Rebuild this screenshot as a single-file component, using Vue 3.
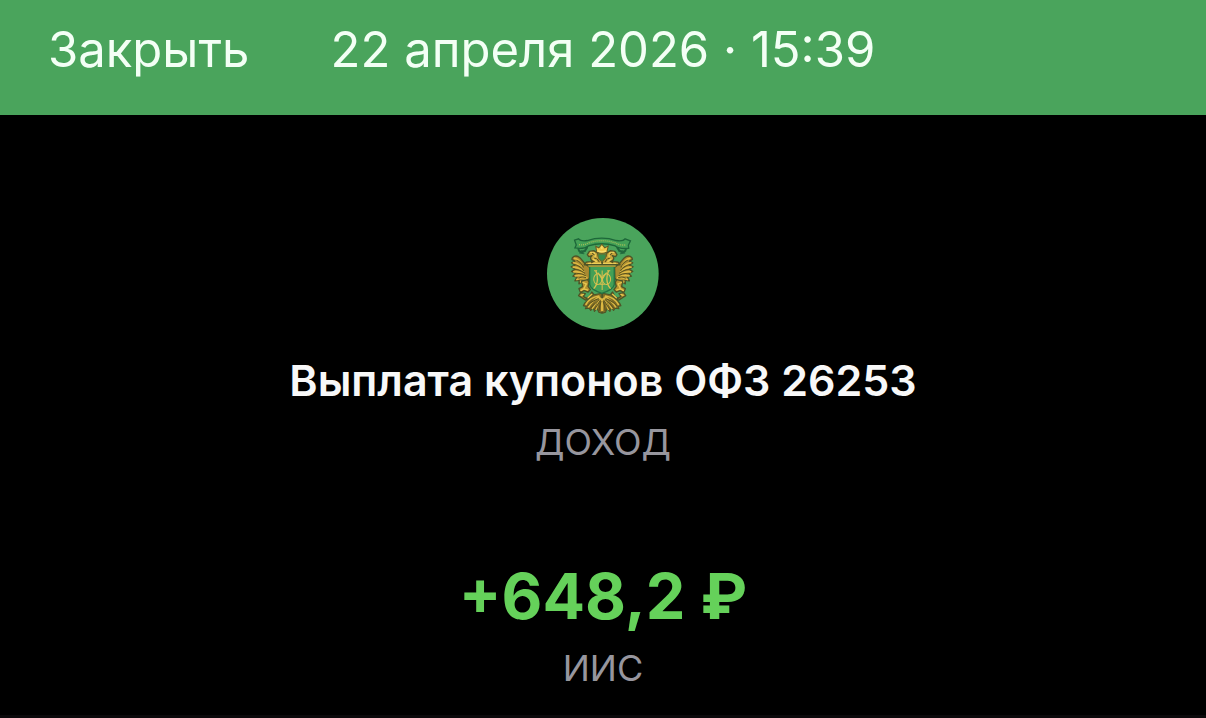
<script setup>
const operation = {
  date: '22 апреля 2026 · 15:39',
  title: 'Выплата купонов ОФЗ 26253',
  kind: 'ДОХОД',
  amount: '+648,2 ₽',
  account: 'ИИС',
}
</script>

<template>
  <div class="screen">
    <header class="bar">
      <button class="close" type="button">Закрыть</button>
      <time class="date" datetime="2026-04-22T15:39">{{ operation.date }}</time>
    </header>
    <main class="details">
      <svg class="emblem" viewBox="24 24 333 333" aria-hidden="true">
        <defs>
          <g id="eagle-half" stroke-linejoin="round" stroke-linecap="round">
            <path d="M142 164 C132 158 128 144 117 139 C109 134 98 139 98 147 L107 152 L97 157 L107 164 L96 169 L107 176 L97 183 L109 189 L101 197 L113 200 L107 211 L120 209 L119 220 L132 211 L135 221 L150 203 L151 171Z" fill="#a98a30" stroke="#4e5427" stroke-width="4" />
            <path d="M106 144 Q119 145 129 166 M103 157 Q118 158 130 176 M102 170 Q118 170 133 184 M104 184 Q119 181 135 192 M108 196 Q121 192 138 198 M113 207 Q126 200 142 201 M124 214 Q132 207 143 206" fill="none" stroke="#ddb943" stroke-width="5" />
            <path d="M113 150 Q124 155 132 170 M107 163 Q121 165 133 180 M108 177 Q121 176 136 188 M112 190 Q124 187 138 195 M119 203 Q128 197 139 201" fill="none" stroke="#59521f" stroke-width="3" />
            <path d="M187 163 L135 163 L141 155 L163 153 C151 151 152 139 158 136 L148 139 L144 133 L150 123 L163 121 L174 128 L177 139 L187 151Z" fill="#c9a53a" stroke="#4e5427" stroke-width="4" />
            <path d="M154 126 L165 128 L168 137 L162 147 L171 153 M148 159 H184" fill="none" stroke="#ecce58" stroke-width="4" />
            <path d="M159 129 l5 4 M164 143 l7 2 M156 157 l8 -4 M174 147 l5 7" stroke="#59521f" stroke-width="3" />
            <path d="M127 211 L145 207 L149 216 L146 227 L153 237 L146 244 L135 240 L123 244 L119 234 L130 228Z M124 246 L138 249 L132 257 L141 263 L151 257 L157 244 L163 251 L157 260 L139 268 L118 255Z" fill="#b5922f" stroke="#4e5427" stroke-width="4" />
            <path d="M131 216 L141 220 L133 235 L144 238 M125 240 L132 235 M132 251 L126 254 M146 261 L157 251" fill="none" stroke="#e6c750" stroke-width="4" />
            <path d="M187 248 L160 253 L136 277 L132 285 L141 287 L138 294 L149 292 L154 299 L161 291 L165 302 L173 293 L178 304 L187 307Z" fill="#7f6c25" stroke="#4e5427" stroke-width="3" />
            <path d="M178 256 Q150 261 140 281 M179 259 Q157 272 148 288 M181 262 Q168 276 159 293 M183 263 Q174 278 170 295 M187 265 V299" fill="none" stroke="#ddb943" stroke-width="5" />
            <path d="M177 264 Q157 270 145 285 M179 267 Q164 280 154 292 M182 270 Q174 283 165 296 M185 272 Q179 288 179 299" fill="none" stroke="#59521f" stroke-width="3" />
            <path d="M127 108 Q114 112 119 121 Q125 130 137 121 L143 112" fill="none" stroke="#20663b" stroke-width="6" />
            <path d="M126 121 l12 2 M121 128 l13 2" stroke="#246b40" stroke-width="3" />
          </g>
        </defs>
        <circle cx="190" cy="190" r="166" fill="#4aa45c" />
        <use href="#eagle-half" />
        <use href="#eagle-half" transform="matrix(-1 0 0 1 376 0)" />
        <path d="M106 90 L118 86 Q124 94 144 91 Q187 77 230 91 Q250 94 256 86 L272 92 L266 105 L267 114 Q240 117 227 107 Q187 94 147 107 Q134 117 107 113 L111 104Z" fill="#43a056" stroke="#1d6739" stroke-width="4" />
        <path d="M119 103 Q133 106 147 98 Q187 85 227 98 Q241 106 259 104" fill="none" stroke="#a5bd58" stroke-width="4" stroke-dasharray="3 3" />
        <path d="M172 126 L169 108 L178 113 L187 102 L196 113 L206 107 L202 126 Q187 132 172 126Z" fill="#efc849" stroke="#655a23" stroke-width="3" />
        <path d="M174 122 Q187 127 200 122 M187 108 V116" fill="none" stroke="#f9df6e" stroke-width="4" />
        <path d="M175 131 H200 L198 144 L187 154 L177 144Z" fill="#378d4b" stroke="#766b29" stroke-width="3" />
        <path d="M151 168 H224 V222 Q222 236 187 248 Q153 236 151 222Z" fill="#43a056" stroke="#247243" stroke-width="4" />
        <path d="M147 167 H228" stroke="#c9a53a" stroke-width="4" />
        <g fill="none" stroke="#d9c04f" stroke-width="3">
          <ellipse cx="175" cy="206" rx="12" ry="16" />
          <ellipse cx="201" cy="206" rx="12" ry="16" />
          <path d="M169 181 Q174 190 174 206 Q173 224 163 234 M207 181 Q202 190 202 206 Q203 224 213 234" stroke-width="4" />
          <path d="M188 180 V238 M164 181 H173 M203 181 H212 M175 186 L188 206 L201 186 M180 221 H196" />
        </g>
      </svg>
      <h1 class="title">{{ operation.title }}</h1>
      <p class="caption kind">{{ operation.kind }}</p>
      <p class="amount">{{ operation.amount }}</p>
      <p class="caption account">{{ operation.account }}</p>
    </main>
    <div class="divider"></div>
  </div>
</template>

<style>
html,
body {
  margin: 0;
  background: #000;
}
</style>

<style scoped>
.screen {
  display: flex;
  flex-direction: column;
  min-height: 100vh;
  background: #000;
  color: #fff;
  font-family: Inter, "Liberation Sans", sans-serif;
}

.bar {
  display: grid;
  grid-template-columns: 1fr auto 1fr;
  align-items: start;
  box-sizing: border-box;
  min-height: 115px;
  padding: 20px 48px;
  background: #4aa45c;
  color: #f3fff5;
  font-size: 49px;
  line-height: 60px;
}

.close {
  justify-self: start;
  padding: 0;
  border: 0;
  background: none;
  color: inherit;
  font: inherit;
  cursor: pointer;
}

.date {
  white-space: nowrap;
}

.details {
  display: flex;
  flex: 1;
  flex-direction: column;
  align-items: center;
  padding-top: 103px;
  text-align: center;
}

.emblem {
  display: block;
  width: 112px;
  height: 112px;
}

.title,
.caption,
.amount {
  margin: 0;
}

.title {
  margin-top: 25px;
  color: #f8f8f8;
  font-size: 43px;
  font-weight: 600;
  line-height: 50px;
}

.caption {
  color: #97969e;
  font-size: 36px;
  line-height: 44px;
}

.kind {
  margin-top: 15px;
}

.amount {
  margin-top: 92px;
  color: #65d15a;
  font-size: 63px;
  font-weight: 700;
  line-height: 80px;
}

.account {
  margin-top: 10px;
}

.divider {
  height: 3px;
  background: #0b090b;
}
</style>
